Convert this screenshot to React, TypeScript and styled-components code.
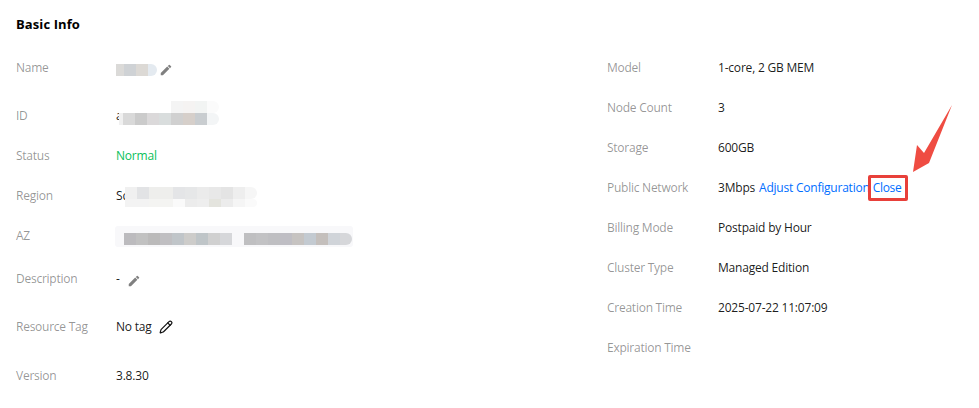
import React from "react";
import styled, { createGlobalStyle } from "styled-components";
import { Pencil } from "lucide-react";
import { MdEdit } from "react-icons/md";

const GlobalStyle = createGlobalStyle`
  html, body {
    margin: 0;
    padding: 0;
    background: #fff;
  }
  body {
    font-family: "Open Sans", "Noto Sans", sans-serif;
    font-size: 12px;
    color: rgba(0, 0, 0, 0.9);
  }
`;

const Page = styled.div`
  position: relative;
  width: 979px;
  height: 408px;
  overflow: hidden;
  padding: 0 16px;
  box-sizing: border-box;
`;

const Title = styled.h3`
  margin: 0;
  height: 48px;
  line-height: 48px;
  font-size: 13px;
  font-weight: 700;
  color: #000;
  letter-spacing: 0.1px;
`;

const Columns = styled.div`
  display: grid;
  grid-template-columns: 591px 1fr;
`;

const Column = styled.div`
  display: flex;
  flex-direction: column;
`;

const Row = styled.div<{ $height?: number }>`
  display: flex;
  align-items: flex-start;
  box-sizing: border-box;
  height: ${(p) => p.$height ?? 40}px;
  padding-top: 10px;
  line-height: 20px;
`;

const Label = styled.div<{ $width: number }>`
  flex: none;
  width: ${(p) => p.$width}px;
  color: rgba(0, 0, 0, 0.42);
  letter-spacing: -0.25px;
`;

const Value = styled.div<{ $ok?: boolean }>`
  display: flex;
  align-items: center;
  height: 20px;
  letter-spacing: -0.2px;
  white-space: nowrap;
  color: ${(p) => (p.$ok ? "#0abf5b" : "rgba(0, 0, 0, 0.9)")};
`;

const Link = styled.a`
  color: #006eff;
  cursor: pointer;
  margin-left: 4px;
  letter-spacing: -0.22px;
`;

const BoxedLink = styled(Link)`
  position: relative;
  margin-left: 3px;
  letter-spacing: -0.3px;

  &::after {
    content: "";
    position: absolute;
    left: -5px;
    right: -7px;
    top: -3px;
    bottom: -3px;
    border: 3px solid #e8403a;
    border-radius: 2px;
  }
`;

const EditIcon = styled(MdEdit)<{ $gap: number }>`
  flex: none;
  margin-left: ${(p) => p.$gap}px;
  margin-top: 3px;
  font-size: 14px;
  color: #808080;
`;

const TagIcon = styled(Pencil)`
  flex: none;
  margin-left: 7px;
  color: #111;
`;

/* the pixelated privacy smudges that hide values in the screenshot */
const Patch = styled.div<{ $left: number; $top: number; $bg?: string; $pad?: string }>`
  flex: none;
  display: flex;
  flex-direction: column;
  margin-left: ${(p) => p.$left}px;
  margin-top: ${(p) => p.$top}px;
  background: ${(p) => p.$bg ?? "transparent"};
  padding: ${(p) => p.$pad ?? "0"};
  border-radius: 3px;
`;

const PatchRow = styled.div<{ $height: number }>`
  display: flex;
  height: ${(p) => p.$height}px;
`;

const Cell = styled.div<{ $w: number; $c: string; $round?: boolean }>`
  flex: none;
  width: ${(p) => p.$w}px;
  background: ${(p) => p.$c};
  border-radius: ${(p) => (p.$round ? "0 6px 6px 0" : "0")};
`;

type CellDef = [number, string];

const Pixels = ({ height, cells }: { height: number; cells: CellDef[] }) => (
  <PatchRow $height={height}>
    {cells.map(([w, c], i) => (
      <Cell key={i} $w={w} $c={c} $round={i === cells.length - 1} />
    ))}
  </PatchRow>
);

const nameCells: CellDef[] = [
  [8, "#dbdad8"],
  [12, "#cfd2d5"],
  [12, "#dcd9d5"],
  [9, "#e4eaf0"],
];

const idTop: CellDef[] = [
  [52, "#fff"],
  [12, "#f4f4f4"],
  [12, "#f5f3f2"],
  [12, "#f2f4f3"],
  [12, "#fbfbfb"],
];

const idBottom: CellDef[] = [
  [4, "#f0f0f0"],
  [12, "#d9d9d9"],
  [12, "#cbcbcb"],
  [12, "#dbd9da"],
  [12, "#d9dddd"],
  [12, "#d0d0d0"],
  [12, "#d6cfca"],
  [12, "#c9cdd0"],
  [12, "#f3f5f6"],
];

const regionTop: CellDef[] = [
  [12, "#f0f0f0"],
  [12, "#e2e3e5"],
  [12, "#eeeeec"],
  [12, "#eeeeec"],
  [12, "#e4e5e7"],
  [12, "#e6e7e8"],
  [12, "#ebebeb"],
  [12, "#e8e8e8"],
  [12, "#e4e4e4"],
  [12, "#eeeeee"],
  [12, "#f6f6f6"],
];

const regionBottom: CellDef[] = [
  [12, "#f3f3f3"],
  [12, "#f3f3f3"],
  [12, "#f4f4f2"],
  [12, "#f4f4f2"],
  [12, "#fafafa"],
  [12, "#ececec"],
  [12, "#eeeeee"],
  [12, "#e4e4de"],
  [12, "#ececec"],
  [12, "#f5f5f5"],
  [12, "#fafafa"],
];

const azCells: CellDef[] = [
  [12, "#bcbbbe"],
  [12, "#c1c1c1"],
  [12, "#bbbaba"],
  [12, "#c0bfc2"],
  [12, "#c0c5c9"],
  [12, "#cdccca"],
  [12, "#bfc5c8"],
  [12, "#d0d0d0"],
  [12, "#d6d7da"],
  [12, "#f8f8fa"],
  [12, "#bfbfc1"],
  [12, "#c2c2c4"],
  [12, "#bfbfc2"],
  [12, "#bfbec4"],
  [12, "#c6c3c1"],
  [12, "#c3cad1"],
  [12, "#c4bfbc"],
  [12, "#d0d4d9"],
  [12, "#d6d7da"],
];

const rightRows = [
  { label: "Model", value: "1-core, 2 GB MEM" },
  { label: "Node Count", value: "3" },
  { label: "Storage", value: "600GB" },
];

const rightRowsAfter = [
  { label: "Billing Mode", value: "Postpaid by Hour" },
  { label: "Cluster Type", value: "Managed Edition" },
  { label: "Creation Time", value: "2025-07-22 11:07:09" },
  { label: "Expiration Time", value: "" },
];

const ArrowMark = styled.svg`
  position: absolute;
  left: 900px;
  top: 95px;
  width: 60px;
  height: 85px;
`;

export default function App() {
  return (
    <Page>
      <GlobalStyle />
      <Title>Basic Info</Title>
      <Columns>
        <Column>
          <Row $height={48}>
            <Label $width={100}>Name</Label>
            <Value>
              <Patch $left={0} $top={4}>
                <Pixels height={12} cells={nameCells} />
              </Patch>
              <EditIcon $gap={2} />
            </Value>
          </Row>
          <Row>
            <Label $width={100}>ID</Label>
            <Value>
              a
              <Patch $left={-3} $top={-6}>
                <Pixels height={12} cells={idTop} />
                <Pixels height={12} cells={idBottom} />
              </Patch>
            </Value>
          </Row>
          <Row>
            <Label $width={100}>Status</Label>
            <Value $ok>Normal</Value>
          </Row>
          <Row>
            <Label $width={100}>Region</Label>
            <Value>
              Sc
              <Patch $left={-3} $top={2}>
                <Pixels height={12} cells={regionTop} />
                <Pixels height={8} cells={regionBottom} />
              </Patch>
            </Value>
          </Row>
          <Row $height={43}>
            <Label $width={100}>AZ</Label>
            <Value>
              <Patch $left={-1} $top={0} $bg="#f8f8fa" $pad="7px 1px 2px 9px">
                <Pixels height={12} cells={azCells} />
              </Patch>
            </Value>
          </Row>
          <Row $height={48}>
            <Label $width={100}>Description</Label>
            <Value>
              -
              <EditIcon $gap={7} />
            </Value>
          </Row>
          <Row $height={49}>
            <Label $width={100}>Resource Tag</Label>
            <Value>
              No tag
              <TagIcon size={14} strokeWidth={2} />
            </Value>
          </Row>
          <Row>
            <Label $width={100}>Version</Label>
            <Value>3.8.30</Value>
          </Row>
        </Column>
        <Column>
          {rightRows.map((r) => (
            <Row key={r.label}>
              <Label $width={111}>{r.label}</Label>
              <Value>{r.value}</Value>
            </Row>
          ))}
          <Row>
            <Label $width={111}>Public Network</Label>
            <Value>
              3Mbps
              <Link>Adjust Configuration</Link>
              <BoxedLink>Close</BoxedLink>
            </Value>
          </Row>
          {rightRowsAfter.map((r) => (
            <Row key={r.label}>
              <Label $width={111}>{r.label}</Label>
              <Value>{r.value}</Value>
            </Row>
          ))}
        </Column>
      </Columns>
      <ArrowMark viewBox="0 0 60 85">
        <polygon points="52,10 29,68 13,77 17,50 24,58" fill="#ef4c42" />
      </ArrowMark>
    </Page>
  );
}
